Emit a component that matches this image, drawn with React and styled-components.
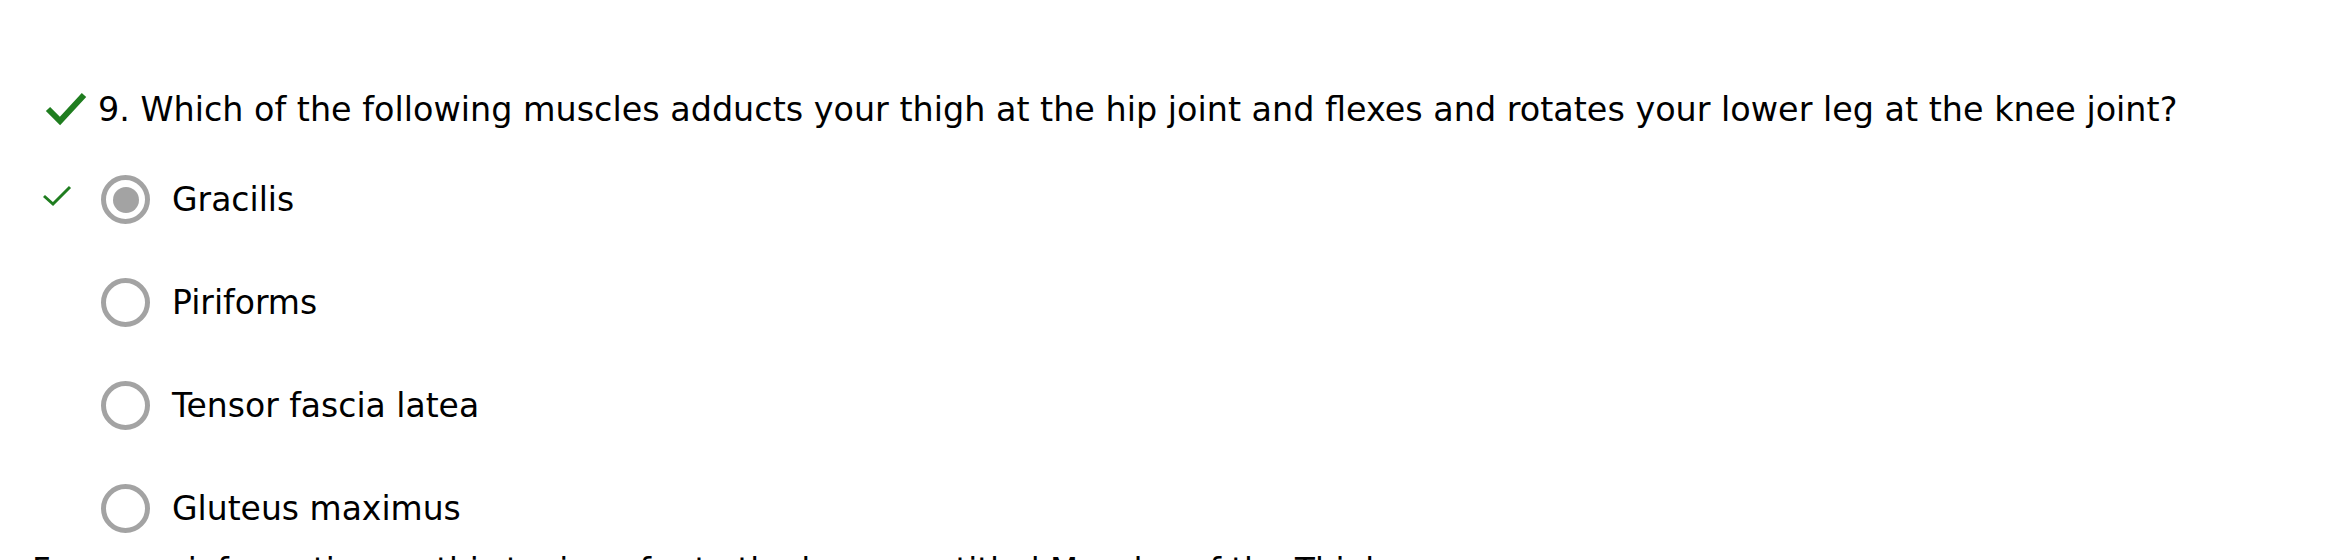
import React from "react";
import styled, { createGlobalStyle } from "styled-components";

const GlobalStyle = createGlobalStyle`
  body {
    margin: 0;
    background: #ffffff;
    font-family: "DejaVu Sans", Verdana, sans-serif;
    color: #000000;
  }
`;

const options = [
  { label: "Gracilis", checked: true, correct: true },
  { label: "Piriforms" },
  { label: "Tensor fascia latea" },
  { label: "Gluteus maximus" },
];

function App() {
  return (
    <>
      <GlobalStyle />
      <Wrapper>
        <Question>
          <BigCheck viewBox="0 0 42 34">
            <path d="M3 17 L15 29 L39 3" fill="none" stroke="#1f7d1f" strokeWidth="6" />
          </BigCheck>
          <QuestionText>
            9. Which of the following muscles adducts your thigh at the hip joint and flexes and rotates your lower leg at the knee joint?
          </QuestionText>
        </Question>
        <Options>
          {options.map((opt) => (
            <Option key={opt.label}>
              <Mark>
                {opt.correct && (
                  <svg width="30" height="22" viewBox="0 0 30 22">
                    <path d="M2 11 L11 19 L28 2" fill="none" stroke="#1f7d1f" strokeWidth="3" />
                  </svg>
                )}
              </Mark>
              <Radio checked={opt.checked} />
              <Label>{opt.label}</Label>
            </Option>
          ))}
        </Options>
        <Footer>
          For more information on this topic, refer to the lesson entitled Muscles of the Thigh.
        </Footer>
      </Wrapper>
    </>
  );
}

const Wrapper = styled.div`
  padding: 84px 0 0 25px;
`;

const Question = styled.div`
  display: flex;
  align-items: center;
  height: 50px;
  padding-left: 20px;
`;

const BigCheck = styled.svg`
  width: 42px;
  height: 34px;
  margin-right: 11px;
  flex-shrink: 0;
`;

const QuestionText = styled.div`
  font-size: 33.4px;
  white-space: nowrap;
`;

const Options = styled.div`
  margin-top: 14px;
`;

const Option = styled.div`
  display: flex;
  align-items: center;
  height: 103px;
`;

const Mark = styled.div`
  width: 76px;
  padding-left: 17px;
  box-sizing: border-box;
  display: flex;
  align-items: center;
  height: 22px;
  margin-top: -8px;
`;

const Radio = styled.div`
  width: 49px;
  height: 49px;
  box-sizing: border-box;
  border: 5px solid #a3a3a3;
  border-radius: 50%;
  display: flex;
  align-items: center;
  justify-content: center;
  &::after {
    content: "";
    display: ${(p) => (p.checked ? "block" : "none")};
    width: 26px;
    height: 26px;
    border-radius: 50%;
    background: #a3a3a3;
  }
`;

const Label = styled.span`
  font-size: 33px;
  margin-left: 22px;
`;

const Footer = styled.div`
  font-size: 32.5px;
  margin-top: -10px;
  padding-left: 7px;
  white-space: nowrap;
`;

export default App;
